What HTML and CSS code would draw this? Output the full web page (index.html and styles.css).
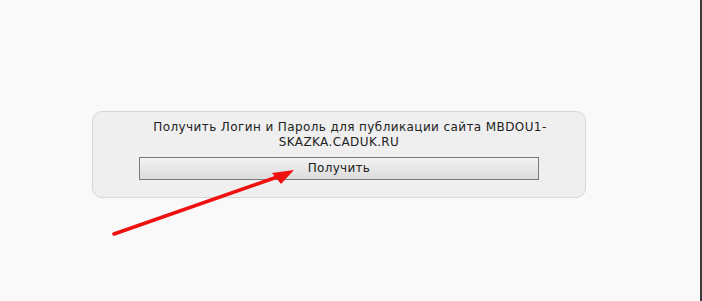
FILE: index.html
```html
<!DOCTYPE html>
<html>
<head>
    <meta charset="UTF-8">
    <title>Получить Логин и Пароль</title>
    <link rel="stylesheet" href="styles.css">
</head>
<body>

<div class="page">
    <div class="publish-box">
        <div class="publish-text">Получить Логин и Пароль для публикации сайта MBDOU1-SKAZKA.CADUK.RU</div>
        <div class="button">Получить</div>
    </div>

    <!-- Pointer arrow drawn over the page -->
    <svg class="arrow" width="702" height="301" viewBox="0 0 702 301">
        <line x1="114" y1="234" x2="280" y2="176" stroke="#f01010" stroke-width="3.5" stroke-linecap="round"/>
        <polygon points="294,170 272,173 281,184" fill="#f01010"/>
    </svg>
</div>

</body>
</html>
```

FILE: styles.css
```css
html, body {
    margin: 0;
    padding: 0;
}
body {
    font-family: "DejaVu Sans", Verdana, sans-serif;
    background-color: #f9f9f9;
    color: #222;
}
.page {
    position: relative;
    height: 301px;
    box-sizing: border-box;
    padding-top: 111px;
    border-right: 2px solid #3a3a3a;
    overflow: hidden;
}
.publish-box {
    width: 494px;
    margin-left: 92px;
    box-sizing: border-box;
    padding: 8px 0 17px;
    background-color: #efefef;
    border: 1px solid #d6d6d6;
    border-radius: 10px;
    display: flex;
    flex-direction: column;
    align-items: center;
}
.publish-text {
    width: 424px;
    text-align: center;
    text-indent: 22px;
    font-size: 12px;
    line-height: 15px;
    letter-spacing: 0.4px;
}
.button {
    width: 400px;
    height: 23px;
    margin-top: 7px;
    box-sizing: border-box;
    border: 1px solid #7a7a7a;
    background: linear-gradient(#f2f2f2, #dcdcdc);
    font-size: 12px;
    line-height: 21px;
    text-align: center;
    letter-spacing: 0.3px;
    user-select: none;
}
.arrow {
    position: absolute;
    left: 0;
    top: 0;
}
```
